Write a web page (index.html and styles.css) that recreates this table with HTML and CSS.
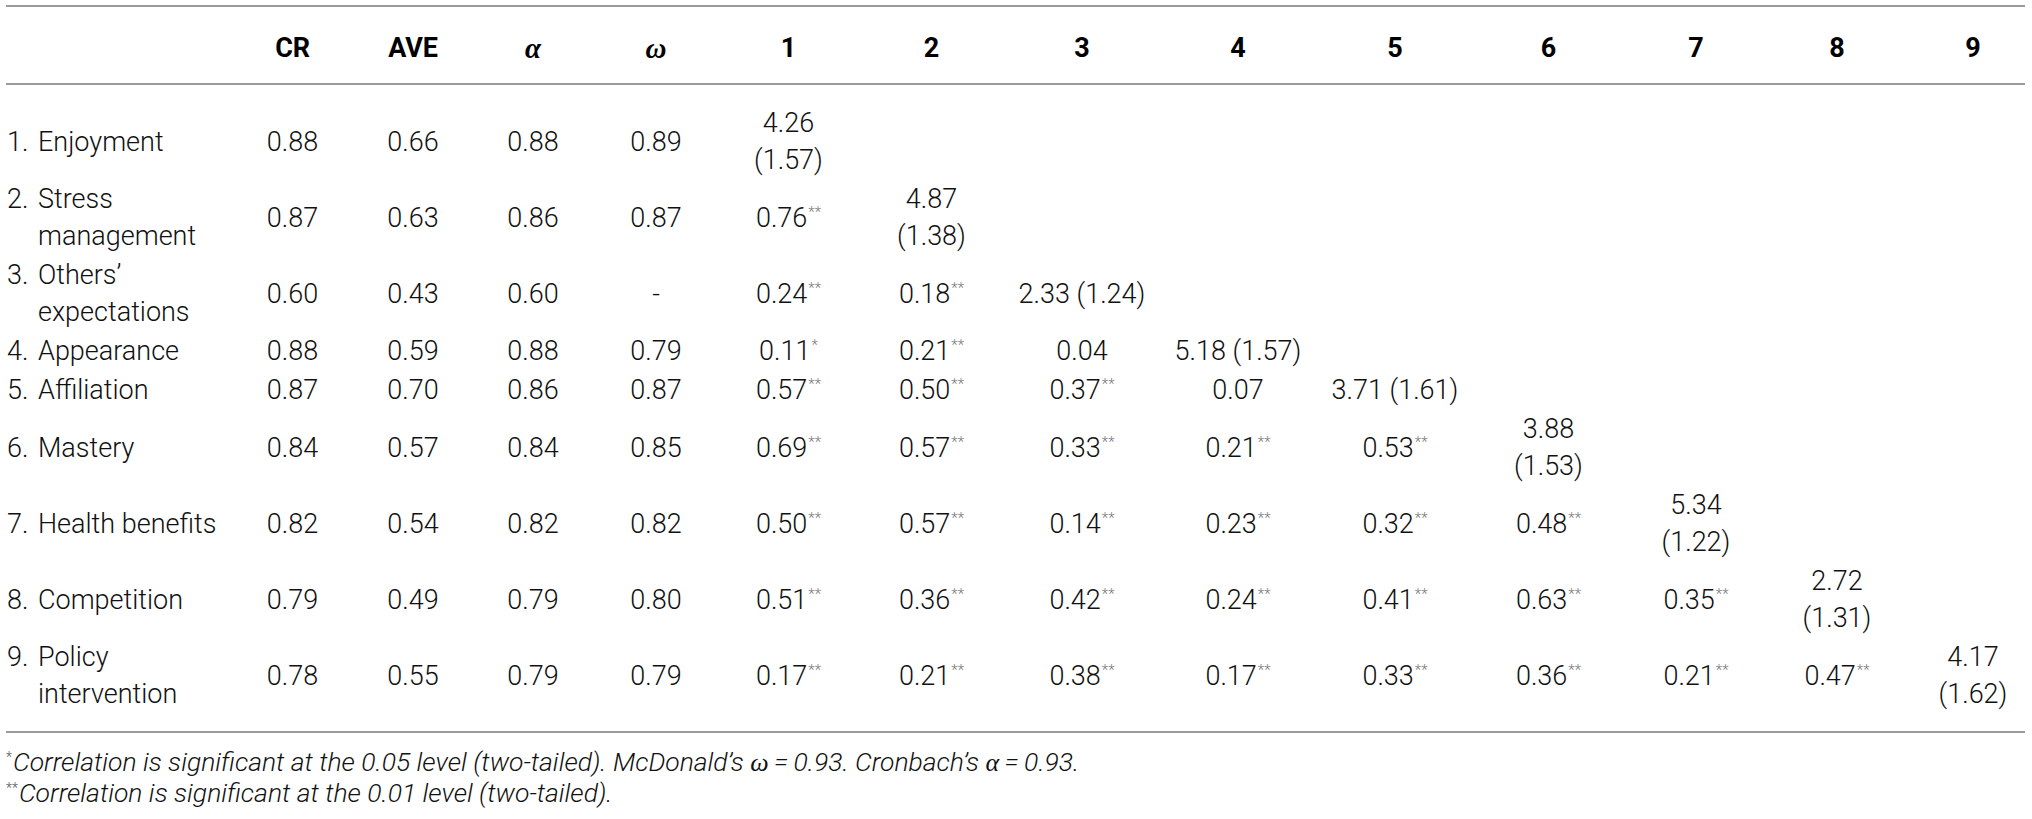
FILE: index.html
```html
<!DOCTYPE html>
<html lang="en">
<head>
<meta charset="utf-8">
<title>Correlation table</title>
<link rel="stylesheet" href="styles.css">
</head>
<body>
<div class="wrap">
<table class="tbl">
  <colgroup>
    <col class="w-lbl"><col class="w-cr"><col class="w-ave"><col class="w-a"><col class="w-o">
    <col class="w-1"><col class="w-2"><col class="w-3"><col class="w-4"><col class="w-5">
    <col class="w-6"><col class="w-7"><col class="w-8"><col class="w-9">
  </colgroup>
  <thead>
    <tr>
      <th class="lbl"></th>
      <th>CR</th><th>AVE</th><th class="greek">α</th><th class="greek">ω</th>
      <th>1</th><th>2</th><th>3</th><th>4</th><th>5</th><th>6</th><th>7</th><th>8</th><th class="last">9</th>
    </tr>
  </thead>
  <tbody>
    <tr class="first">
      <td class="lbl"><div class="name"><span class="n">1.</span><span>Enjoyment</span></div></td>
      <td>0.88</td><td>0.66</td><td>0.88</td><td>0.89</td>
      <td>4.26<br>(1.57)</td><td></td><td></td><td></td><td></td><td></td><td></td><td></td><td class="last"></td>
    </tr>
    <tr>
      <td class="lbl"><div class="name"><span class="n">2.</span><span>Stress management</span></div></td>
      <td>0.87</td><td>0.63</td><td>0.86</td><td>0.87</td>
      <td>0.76<sup>**</sup></td><td>4.87<br>(1.38)</td><td></td><td></td><td></td><td></td><td></td><td></td><td class="last"></td>
    </tr>
    <tr>
      <td class="lbl"><div class="name"><span class="n">3.</span><span>Others’ expectations</span></div></td>
      <td>0.60</td><td>0.43</td><td>0.60</td><td>-</td>
      <td>0.24<sup>**</sup></td><td>0.18<sup>**</sup></td><td class="nw">2.33 (1.24)</td><td></td><td></td><td></td><td></td><td></td><td class="last"></td>
    </tr>
    <tr>
      <td class="lbl"><div class="name"><span class="n">4.</span><span>Appearance</span></div></td>
      <td>0.88</td><td>0.59</td><td>0.88</td><td>0.79</td>
      <td>0.11<sup>*</sup></td><td>0.21<sup>**</sup></td><td>0.04</td><td class="nw">5.18 (1.57)</td><td></td><td></td><td></td><td></td><td class="last"></td>
    </tr>
    <tr>
      <td class="lbl"><div class="name"><span class="n">5.</span><span>Affiliation</span></div></td>
      <td>0.87</td><td>0.70</td><td>0.86</td><td>0.87</td>
      <td>0.57<sup>**</sup></td><td>0.50<sup>**</sup></td><td>0.37<sup>**</sup></td><td>0.07</td><td class="nw">3.71 (1.61)</td><td></td><td></td><td></td><td class="last"></td>
    </tr>
    <tr>
      <td class="lbl"><div class="name"><span class="n">6.</span><span>Mastery</span></div></td>
      <td>0.84</td><td>0.57</td><td>0.84</td><td>0.85</td>
      <td>0.69<sup>**</sup></td><td>0.57<sup>**</sup></td><td>0.33<sup>**</sup></td><td>0.21<sup>**</sup></td><td>0.53<sup>**</sup></td><td>3.88<br>(1.53)</td><td></td><td></td><td class="last"></td>
    </tr>
    <tr>
      <td class="lbl"><div class="name"><span class="n">7.</span><span>Health benefits</span></div></td>
      <td>0.82</td><td>0.54</td><td>0.82</td><td>0.82</td>
      <td>0.50<sup>**</sup></td><td>0.57<sup>**</sup></td><td>0.14<sup>**</sup></td><td>0.23<sup>**</sup></td><td>0.32<sup>**</sup></td><td>0.48<sup>**</sup></td><td>5.34<br>(1.22)</td><td></td><td class="last"></td>
    </tr>
    <tr>
      <td class="lbl"><div class="name"><span class="n">8.</span><span>Competition</span></div></td>
      <td>0.79</td><td>0.49</td><td>0.79</td><td>0.80</td>
      <td>0.51<sup>**</sup></td><td>0.36<sup>**</sup></td><td>0.42<sup>**</sup></td><td>0.24<sup>**</sup></td><td>0.41<sup>**</sup></td><td>0.63<sup>**</sup></td><td>0.35<sup>**</sup></td><td>2.72<br>(1.31)</td><td class="last"></td>
    </tr>
    <tr class="final">
      <td class="lbl"><div class="name"><span class="n">9.</span><span>Policy intervention</span></div></td>
      <td>0.78</td><td>0.55</td><td>0.79</td><td>0.79</td>
      <td>0.17<sup>**</sup></td><td>0.21<sup>**</sup></td><td>0.38<sup>**</sup></td><td>0.17<sup>**</sup></td><td>0.33<sup>**</sup></td><td>0.36<sup>**</sup></td><td>0.21<sup>**</sup></td><td>0.47<sup>**</sup></td><td class="last">4.17<br>(1.62)</td>
    </tr>
  </tbody>
</table>
<div class="notes">
  <p class="note"><sup>*</sup>Correlation is significant at the 0.05 level (two-tailed). McDonald’s <span class="gk">ω</span>&#8201;=&#8201;0.93. Cronbach’s <span class="gk">α</span>&#8201;=&#8201;0.93.</p>
  <p class="note"><sup>**</sup>Correlation is significant at the 0.01 level (two-tailed).</p>
</div>
</div>
</body>
</html>
```
FILE: styles.css
```css
html, body {
  margin: 0;
  padding: 0;
  background: #ffffff;
}
body {
  font-family: Roboto, "Liberation Sans", sans-serif;
  font-weight: 300;
  color: #111111;
}
.wrap {
  padding: 5px 0 0 6px;
}
.tbl {
  border-collapse: separate;
  border-spacing: 0;
  table-layout: fixed;
  width: 2019px;
  font-size: 27px;
  line-height: 37px;
}
.w-lbl { width: 226px; }
.w-cr { width: 121px; }
.w-ave { width: 120px; }
.w-a { width: 120px; }
.w-o { width: 126px; }
.w-1 { width: 139px; }
.w-2 { width: 147px; }
.w-3 { width: 154px; }
.w-4 { width: 158px; }
.w-5 { width: 156px; }
.w-6 { width: 151px; }
.w-7 { width: 144px; }
.w-8 { width: 138px; }
.w-9 { width: 119px; }

.tbl th {
  font-weight: 700;
  color: #000;
  text-align: center;
  padding: 23px 0 16px;
  border-top: 2px solid #9a9a9a;
  border-bottom: 2px solid #9a9a9a;
  letter-spacing: -0.2px;
}
.tbl th.greek {
  font-family: "Liberation Serif", serif;
  font-style: italic;
  font-weight: 700;
  font-size: 29px;
}
.tbl td {
  text-align: center;
  vertical-align: middle;
  padding: 1px 0;
  white-space: nowrap;
}
.tbl .last {
  padding-left: 15px;
}
.tbl tr.first td {
  padding-top: 20px;
}
.tbl tr.final td {
  padding-bottom: 18px;
  border-bottom: 2px solid #9a9a9a;
}
.tbl td.lbl {
  text-align: left;
  white-space: normal;
  padding-left: 1px;
}
.name {
  display: flex;
}
.name .n {
  flex: none;
  width: 31px;
}
.tbl sup {
  font-size: 15px;
  line-height: 0;
  vertical-align: 10px;
  color: #777;
  margin-left: 1px;
}
.notes {
  padding-top: 14px;
}
.note {
  margin: 0;
  font-style: italic;
  font-size: 26.5px;
  line-height: 30px;
  color: #111;
  white-space: nowrap;
}
.note sup {
  font-style: normal;
  font-size: 14px;
  line-height: 0;
  vertical-align: 9px;
  color: #555;
  margin-right: 1px;
}
.gk {
  font-family: "Liberation Serif", serif;
  font-style: italic;
  font-size: 26px;
}
```
